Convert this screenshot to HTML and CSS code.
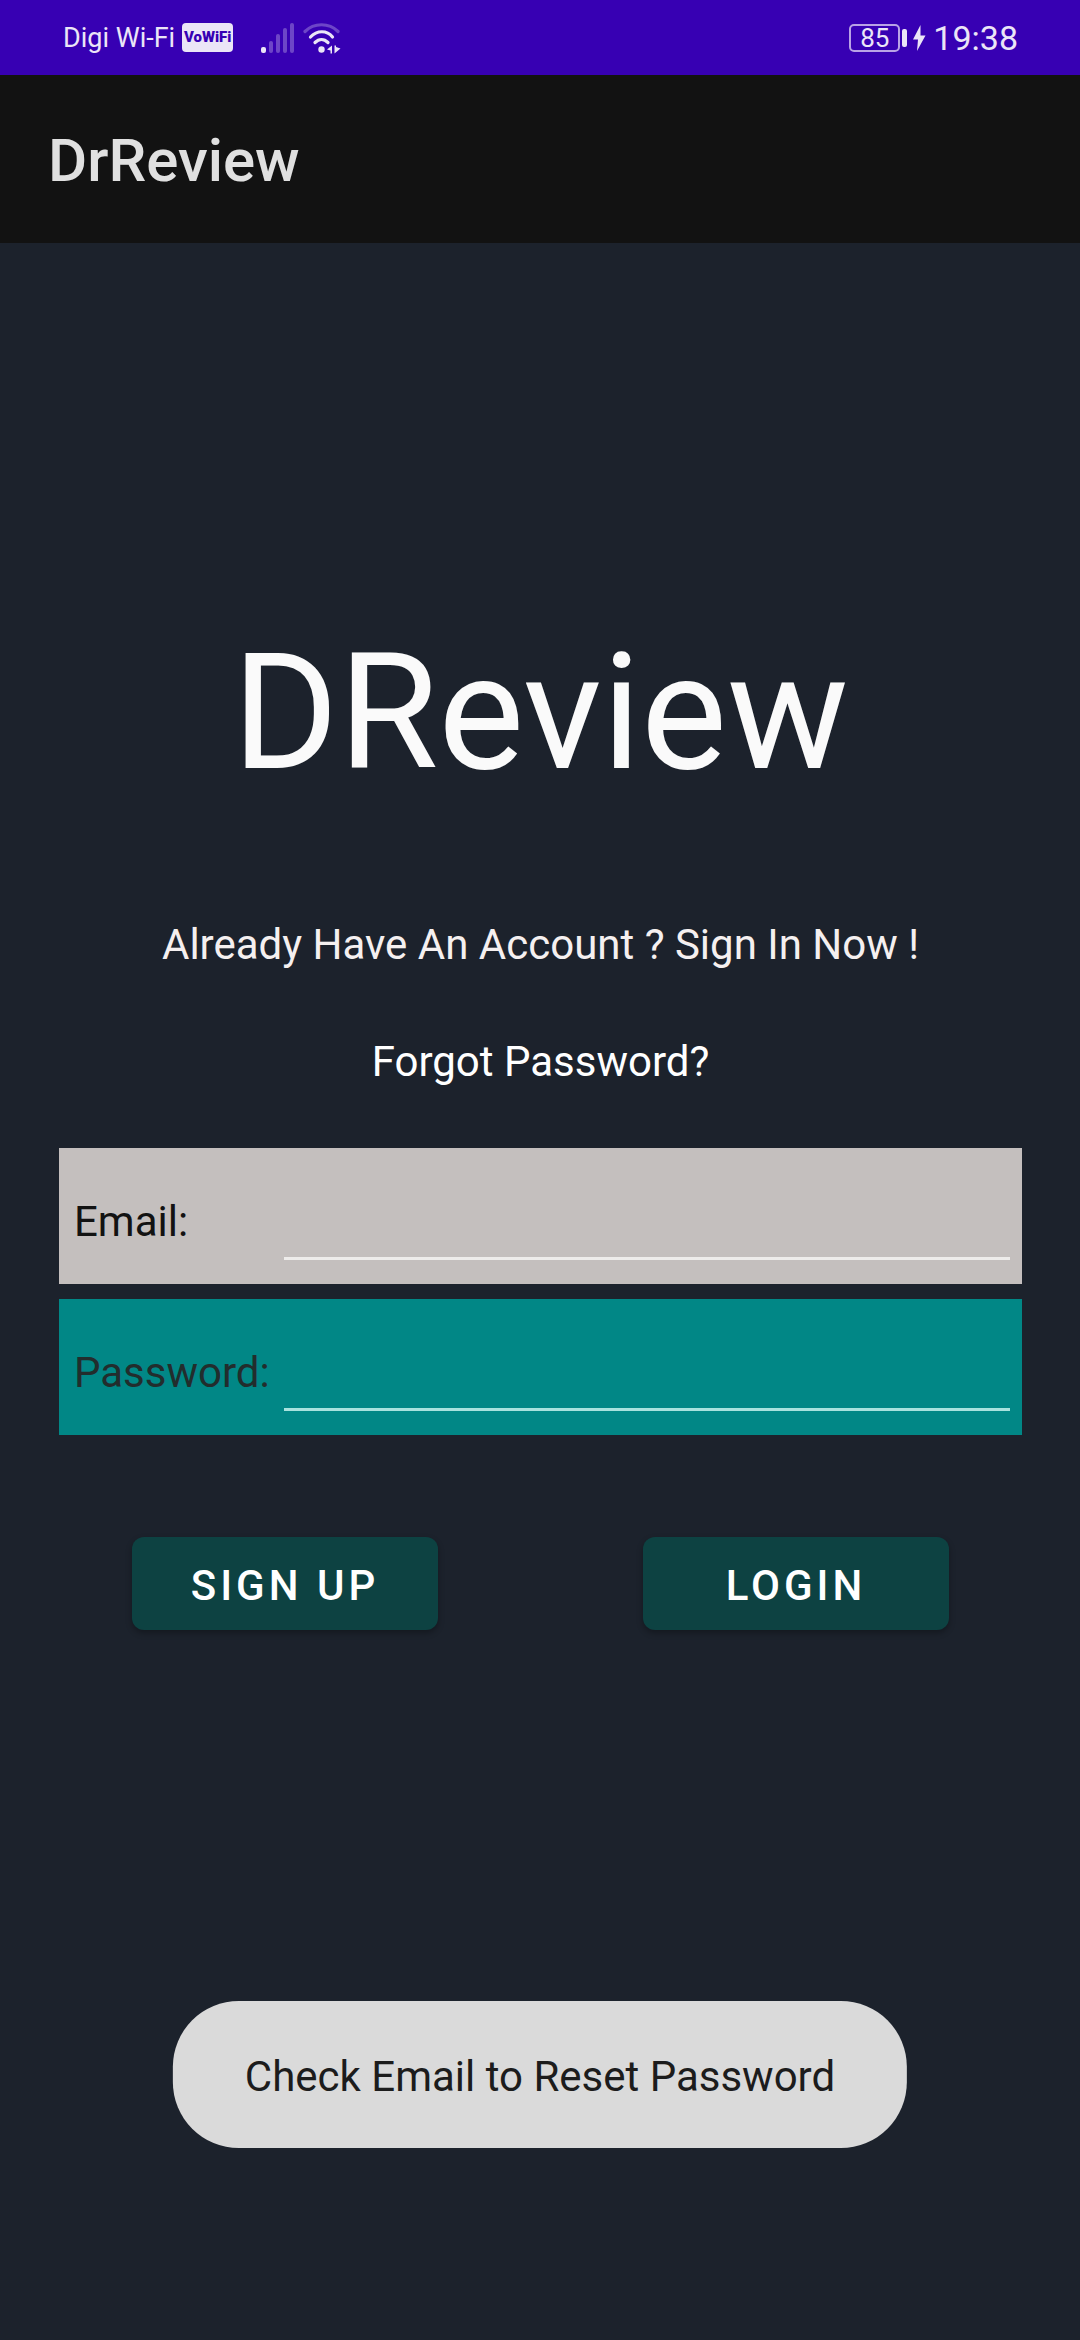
FILE: index.html
```html
<!DOCTYPE html>
<html lang="en">
<head>
  <meta charset="utf-8">
  <meta name="viewport" content="width=device-width, initial-scale=1">
  <title>DrReview</title>
  <link rel="stylesheet" href="styles.css">
</head>
<body>
  <div class="status-bar">
    <div class="status-group">
      <span class="carrier">Digi Wi-Fi</span>
      <span class="vowifi">VoWiFi</span>
      <svg class="signal" width="34" height="32" viewBox="0 0 34 32" aria-hidden="true">
        <rect x="0" y="25" width="5" height="6" rx="2"/>
        <g opacity="0.3">
          <rect x="8" y="19" width="4" height="12" rx="2"/>
          <rect x="15" y="12" width="4" height="19" rx="2"/>
          <rect x="22" y="6" width="4" height="25" rx="2"/>
          <rect x="29" y="1" width="4" height="30" rx="2"/>
        </g>
      </svg>
      <svg class="wifi" width="38" height="32" viewBox="0 0 38 32" aria-hidden="true">
        <g fill="none" stroke-width="3.2" stroke-linecap="round">
          <path d="M2 9.500C11 .500 26 .500 35 9.500" opacity="0.3"/>
          <path d="M7.500 15C14 8 24 8 29.500 15"/>
          <path d="M12 20.500C16 16.500 21 16.500 25 20.500"/>
        </g>
        <circle cx="18.500" cy="27.500" r="3.200"/>
        <path d="M24 27.500L29 23.500V31.500H27.500V28.500ZM31.500 23.500H33V25L37.500 26.500L31.500 31.500Z"/>
      </svg>
    </div>
    <div class="status-group">
      <span class="battery">85</span>
      <span class="battery-tip"></span>
      <svg class="bolt" width="13" height="26" viewBox="0 0 13 26" aria-hidden="true">
        <path d="M7.500 0L0 14.500H5L4 26L12.500 10.500H7.500Z"/>
      </svg>
      <span class="clock">19:38</span>
    </div>
  </div>

  <header class="app-bar">DrReview</header>

  <main class="content">
    <h1 class="brand">DReview</h1>
    <p class="prompt">Already Have An Account ? Sign In Now !</p>
    <a class="forgot" href="#reset">Forgot Password?</a>

    <form class="login-form">
      <div class="field field-email">
        <label class="field-label" for="email">Email:</label>
        <input class="field-input" id="email" type="email">
      </div>
      <div class="field field-password">
        <label class="field-label" for="password">Password:</label>
        <input class="field-input" id="password" type="password">
      </div>
      <div class="actions">
        <button class="action" type="button">SIGN UP</button>
        <button class="action" type="submit">LOGIN</button>
      </div>
    </form>
  </main>

  <div class="toast" role="status">Check Email to Reset Password</div>
</body>
</html>
```
FILE: styles.css
```css
* {
  box-sizing: border-box;
}

body {
  margin: 0;
  min-height: 100vh;
  background: #1c222c;
  color: #ffffff;
  font-family: Roboto, "Liberation Sans", sans-serif;
  font-size: 42px;
  line-height: 50px;
}

/* System status bar */
.status-bar {
  display: flex;
  justify-content: space-between;
  height: 75px;
  padding: 0 62px 0 63px;
  background: #3700b3;
  color: #ebe5f7;
}

.status-group {
  display: flex;
  align-items: center;
}

.status-bar svg {
  fill: #ebe5f7;
  stroke: none;
}

.status-bar .wifi g {
  stroke: #ebe5f7;
  fill: none;
}

.carrier {
  font-size: 27px;
}

.vowifi {
  width: 51px;
  height: 29px;
  margin-left: 7px;
  border-radius: 4px;
  background: #ebe5f7;
  color: #3700b3;
  font-size: 15px;
  font-weight: 900;
  line-height: 29px;
  text-align: center;
}

.signal {
  margin-left: 28px;
}

.wifi {
  margin-left: 8px;
}

.battery {
  width: 51px;
  height: 28px;
  border: 2px solid #b9a2e6;
  border-radius: 5px;
  font-size: 26px;
  line-height: 25px;
  text-align: center;
}

.battery-tip {
  width: 5px;
  height: 18px;
  margin-left: 2px;
  border-radius: 2px;
  background: #ebe5f7;
}

.bolt {
  margin-left: 6px;
}

.clock {
  margin-left: 7px;
  font-size: 34px;
}

/* Application bar */
.app-bar {
  height: 168px;
  padding: 2px 0 0 48px;
  background: #121212;
  color: #e0e0e0;
  font-size: 60px;
  font-weight: 500;
  line-height: 168px;
}

.content {
  display: flex;
  flex-direction: column;
  align-items: center;
  padding: 375px 58px 0 59px;
}

.brand {
  margin: 0;
  color: #fafafa;
  font-size: 162px;
  font-weight: 400;
  line-height: 190px;
}

.prompt {
  margin: 112px 0 67px;
  color: #f5f0f0;
}

.forgot {
  color: #ffffff;
  text-decoration: none;
}

/* Sign-in form */
.login-form {
  display: flex;
  flex-direction: column;
  gap: 15px;
  width: 100%;
  margin-top: 61px;
}

.field {
  display: grid;
  grid-template-columns: 210px 1fr;
  align-items: end;
  padding: 12px 12px 24px 15px;
}

.field-email {
  background: #c4bfbe;
  color: #121212;
}

.field-password {
  background: #018786;
  color: #222d2d;
}

.field-label {
  padding-bottom: 13px;
}

.field-input {
  width: 100%;
  height: 100px;
  padding: 0;
  border: 0;
  border-bottom: 3px solid #eeeceb;
  outline: 0;
  background: transparent;
  color: inherit;
  font: inherit;
}

.field-password .field-input {
  border-color: #a8e2de;
}

.actions {
  display: flex;
  justify-content: space-between;
  margin-top: 87px;
  padding: 0 73px;
}

.action {
  width: 306px;
  height: 93px;
  padding: 4px 0 0;
  border: 0;
  border-radius: 12px;
  background: #0d4242;
  box-shadow: 0 3px 6px rgba(0, 0, 0, 0.3);
  color: #ffffff;
  font-family: inherit;
  font-size: 42px;
  font-weight: 500;
  letter-spacing: 4px;
}

/* Message floating over the screen */
.toast {
  position: fixed;
  bottom: 192px;
  left: 50%;
  transform: translateX(-50%);
  padding: 51px 72px 46px;
  border-radius: 66px;
  background: #dadada;
  color: #1c1c1c;
  white-space: nowrap;
}
```
